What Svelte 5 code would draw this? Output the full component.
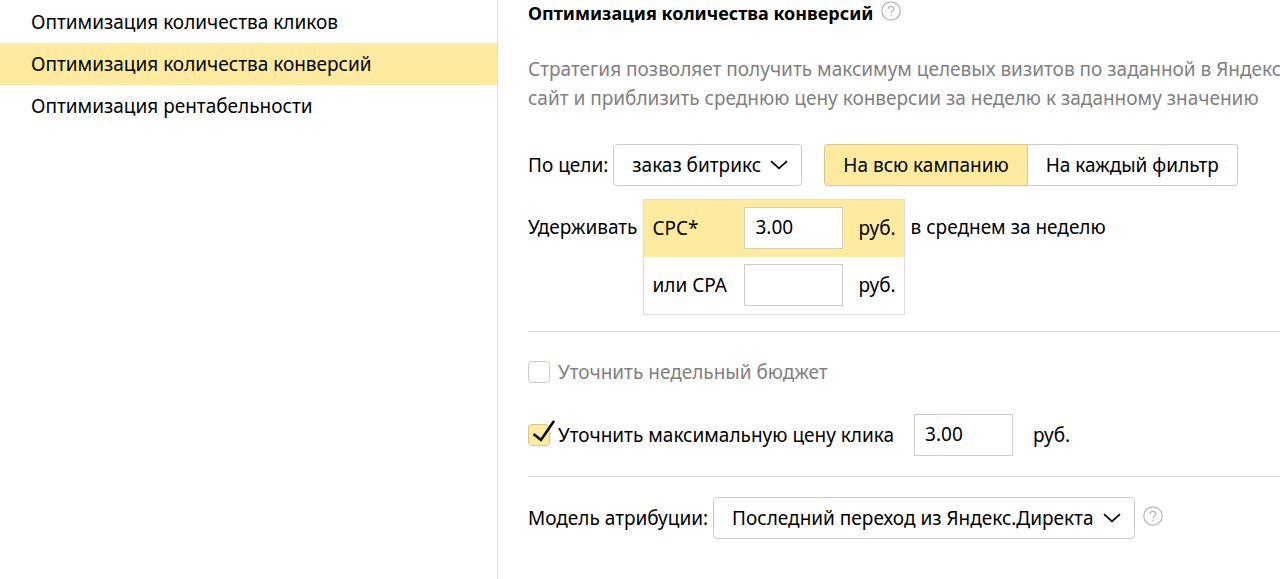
<script lang="ts">
  const strategies = [
    { id: "clicks", title: "Оптимизация количества кликов" },
    { id: "conversions", title: "Оптимизация количества конверсий" },
    { id: "roi", title: "Оптимизация рентабельности" },
  ];

  const scopes = [
    { id: "campaign", title: "На всю кампанию" },
    { id: "filter", title: "На каждый фильтр" },
  ];

  let strategy = "conversions";
  let scope = "campaign";
  let goal = "заказ битрикс";
  let attribution = "Последний переход из Яндекс.Директа";
  let cpc = "3.00";
  let cpa = "";
  let maxClickPrice = "3.00";
  let limitBudget = false;
  let limitClickPrice = true;
</script>

<div class="page">
  <nav class="strategies" aria-label="Стратегии">
    {#each strategies as item}
      <button
        type="button"
        class:selected={item.id === strategy}
        on:click={() => (strategy = item.id)}
      >
        {item.title}
      </button>
    {/each}
  </nav>

  <main>
    <div class="heading">
      <h1>Оптимизация количества конверсий</h1>
      <button type="button" class="help" aria-label="Справка">
        <svg viewBox="0 0 20 20" aria-hidden="true">
          <circle cx="10" cy="10" r="9.2" />
          <path d="M7.2 8C7.2 6.3 8.4 5.3 10 5.3S12.8 6.3 12.8 7.8C12.8 9.7 10 9.8 10 12.2M10 13.7V15" />
        </svg>
      </button>
    </div>

    <p class="description">
      Стратегия позволяет получить максимум целевых визитов по заданной в Яндекс<br />
      сайт и приблизить среднюю цену конверсии за неделю к заданному значению
    </p>

    <div class="row goal">
      <label for="goal">По цели:</label>
      <span class="select">
        <select id="goal" bind:value={goal}>
          <option>заказ битрикс</option>
        </select>
        <svg viewBox="0 0 18 10" aria-hidden="true"><path d="M1 1.2L9 8.4L17 1.2" /></svg>
      </span>
      <div class="scopes" role="group" aria-label="Область действия">
        {#each scopes as item}
          <button
            type="button"
            class:selected={item.id === scope}
            aria-pressed={item.id === scope}
            on:click={() => (scope = item.id)}
          >
            {item.title}
          </button>
        {/each}
      </div>
    </div>

    <div class="row hold">
      <span class="side">Удерживать</span>
      <div class="prices">
        <div class="price selected">
          <label for="cpc">CPC*</label>
          <input id="cpc" type="text" bind:value={cpc} />
          <span>руб.</span>
        </div>
        <div class="price">
          <label for="cpa">или CPA</label>
          <input id="cpa" type="text" bind:value={cpa} />
          <span>руб.</span>
        </div>
      </div>
      <span class="side">в среднем за неделю</span>
    </div>

    <section class="limits">
      <div class="row muted">
        <span class="checkbox">
          <input id="budget" type="checkbox" bind:checked={limitBudget} />
          <svg viewBox="0 0 28 26" aria-hidden="true"><path d="M5.5 14L13 20L26 1" /></svg>
        </span>
        <label for="budget">Уточнить недельный бюджет</label>
      </div>
      <div class="row click-price">
        <span class="checkbox">
          <input id="click-limit" type="checkbox" bind:checked={limitClickPrice} />
          <svg viewBox="0 0 28 26" aria-hidden="true"><path d="M5.5 14L13 20L26 1" /></svg>
        </span>
        <label for="click-limit">Уточнить максимальную цену клика</label>
        <input type="text" aria-label="Максимальная цена клика" bind:value={maxClickPrice} />
        <span>руб.</span>
      </div>
    </section>

    <div class="row attribution">
      <label for="attribution">Модель атрибуции:</label>
      <span class="select">
        <select id="attribution" bind:value={attribution}>
          <option>Последний переход из Яндекс.Директа</option>
        </select>
        <svg viewBox="0 0 18 10" aria-hidden="true"><path d="M1 1.2L9 8.4L17 1.2" /></svg>
      </span>
      <button type="button" class="help" aria-label="Справка">
        <svg viewBox="0 0 20 20" aria-hidden="true">
          <circle cx="10" cy="10" r="9.2" />
          <path d="M7.2 8C7.2 6.3 8.4 5.3 10 5.3S12.8 6.3 12.8 7.8C12.8 9.7 10 9.8 10 12.2M10 13.7V15" />
        </svg>
      </button>
    </div>
  </main>
</div>

<style>
  :global(body) {
    background: #fff;
  }

  .page {
    display: grid;
    grid-template-columns: 498px minmax(0, 1fr);
    min-height: 100vh;
    color: #000;
    font: 19px/28px "Noto Sans", sans-serif;
  }

  button,
  input,
  select {
    box-sizing: border-box;
    margin: 0;
    color: inherit;
    font: inherit;
  }

  button {
    cursor: pointer;
  }

  .strategies {
    display: flex;
    flex-direction: column;
    padding-top: 1px;
    border-right: 1px solid #dcdcdc;
  }

  .strategies button {
    height: 42px;
    padding: 0 31px;
    border: 0;
    background: none;
    text-align: left;
  }

  .strategies .selected {
    background: #ffeba0;
  }

  main {
    padding-left: 30px;
    overflow: hidden;
  }

  .heading {
    display: flex;
    align-items: center;
    gap: 8px;
    height: 26px;
  }

  h1 {
    margin: 0;
    font-size: 18px;
    font-weight: 700;
  }

  .help {
    width: 20px;
    height: 20px;
    margin-bottom: 4px;
    padding: 0;
    border: 0;
    background: none;
  }

  .help svg {
    display: block;
    fill: none;
    stroke: #b8b8b8;
    stroke-width: 1.3;
  }

  .description {
    margin: 29px 0 31px;
    color: #808080;
    line-height: 29px;
    white-space: nowrap;
  }

  .row {
    display: flex;
    align-items: center;
    white-space: nowrap;
  }

  .select {
    position: relative;
    margin-left: 5px;
  }

  select {
    display: block;
    height: 42px;
    padding: 0 40px 0 18px;
    border: 1px solid #ccc;
    border-radius: 4px;
    appearance: none;
    background: #fff;
  }

  .select svg {
    position: absolute;
    top: 16px;
    right: 14px;
    width: 18px;
    height: 10px;
    fill: none;
    stroke: #000;
    stroke-width: 1.8;
    pointer-events: none;
  }

  .scopes {
    display: flex;
    margin-left: 22px;
  }

  .scopes button {
    height: 42px;
    padding: 0 18px;
    border: 1px solid #ccc;
    background: #fff;
  }

  .scopes button:first-child {
    border-radius: 4px 0 0 4px;
  }

  .scopes button:last-child {
    border-left: 0;
    border-radius: 0 4px 4px 0;
  }

  .scopes .selected {
    border-color: #d6c68b;
    background: #ffeba0;
  }

  .hold {
    align-items: flex-start;
    gap: 6px;
    margin-top: 13px;
  }

  .side {
    padding-top: 14px;
  }

  .prices {
    border: 1px solid #dcdcdc;
  }

  .price {
    display: grid;
    grid-template-columns: 84px 99px auto;
    gap: 8px;
    align-items: center;
    padding: 7px 8px 8px;
  }

  .price span {
    padding-left: 7px;
  }

  .price.selected {
    background: #ffeba0;
  }

  input[type="text"] {
    width: 99px;
    height: 42px;
    padding: 0 10px 2px;
    border: 1px solid #ccc;
    border-radius: 0;
    background: #fff;
  }

  .price.selected input {
    border-color: #d6cfb0;
  }

  .limits {
    margin: 16px 0 20px;
    padding: 26px 0 20px;
    border: solid #dcdcdc;
    border-width: 1px 0;
  }

  .muted {
    color: #808080;
  }

  .checkbox {
    position: relative;
    margin-right: 8px;
  }

  .checkbox input {
    display: block;
    width: 22px;
    height: 22px;
    border: 1px solid #ccc;
    border-radius: 4px;
    appearance: none;
    background: #fff;
  }

  .checkbox input:checked {
    border-color: #d6c68b;
    background: #ffeba0;
  }

  .checkbox svg {
    position: absolute;
    bottom: 0;
    left: 0;
    display: none;
    width: 28px;
    height: 26px;
    fill: none;
    stroke: #000;
    stroke-width: 2.5;
    pointer-events: none;
  }

  .checkbox input:checked + svg {
    display: block;
  }

  .click-price {
    gap: 20px;
    margin-top: 28px;
  }

  .click-price .checkbox {
    margin-right: -12px;
  }

  .attribution .help {
    margin-left: 8px;
  }
</style>
